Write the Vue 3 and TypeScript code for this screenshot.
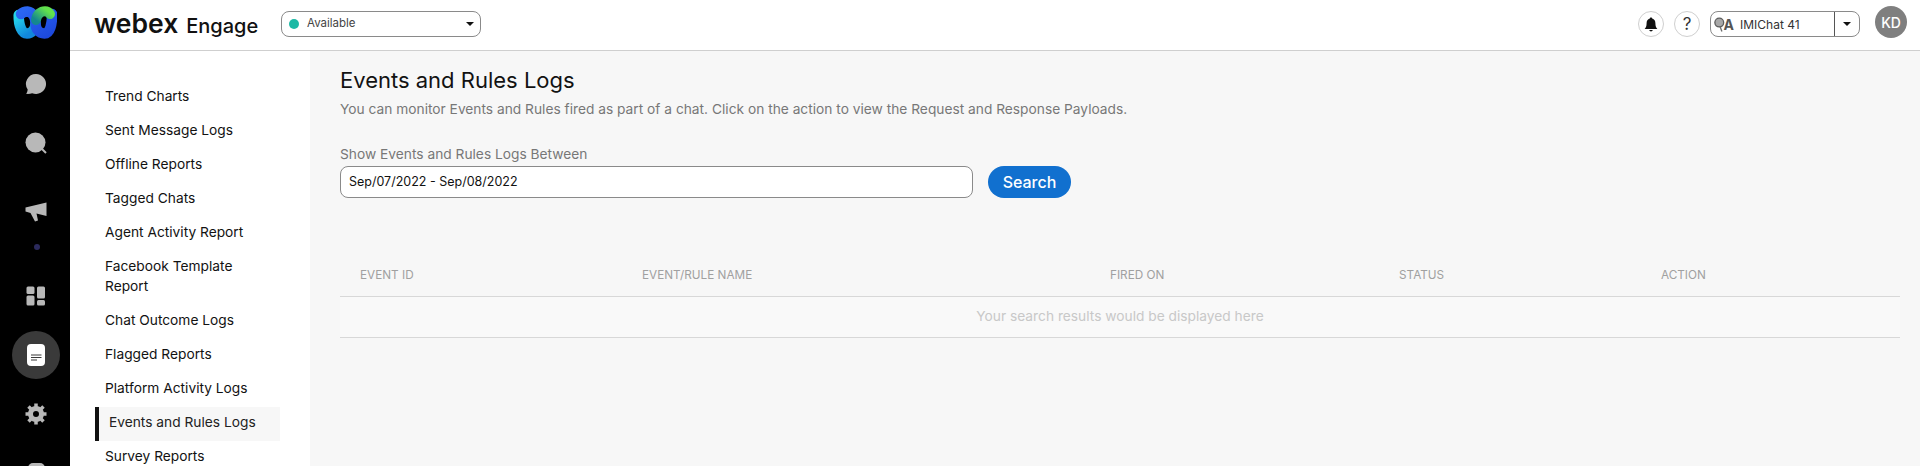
<script setup lang="ts">
const navItems = [
  'Trend Charts',
  'Sent Message Logs',
  'Offline Reports',
  'Tagged Chats',
  'Agent Activity Report',
  'Facebook Template Report',
  'Chat Outcome Logs',
  'Flagged Reports',
  'Platform Activity Logs',
  'Events and Rules Logs',
  'Survey Reports',
]
const activeItem = 'Events and Rules Logs'
const columns = ['EVENT ID', 'EVENT/RULE NAME', 'FIRED ON', 'STATUS', 'ACTION']
</script>

<template>
  <div class="app">
    <aside class="rail">
      <svg class="logo" width="44" height="34" viewBox="7 6 44 34" fill="none" stroke-linecap="round">
        <defs>
          <linearGradient id="wbxA" x1="0" y1="0" x2="0.6" y2="1">
            <stop offset="0" stop-color="#25d6ea" />
            <stop offset="1" stop-color="#1187dc" />
          </linearGradient>
          <linearGradient id="wbxB" x1="0" y1="0" x2="1" y2="1">
            <stop offset="0" stop-color="#2b66f2" />
            <stop offset="1" stop-color="#1d49dc" />
          </linearGradient>
          <linearGradient id="wbxC" x1="0" y1="1" x2="1" y2="0.2">
            <stop offset="0" stop-color="#14888f" />
            <stop offset="1" stop-color="#62e24c" />
          </linearGradient>
        </defs>
        <path d="M12.700 15C12.500 26 16 33.500 21 33.500C26 33.500 29 29 29.500 24" stroke="url(#wbxA)" stroke-width="10.500" />
        <path d="M15 14C17 12 19 11.500 21.500 11.500C27 12 29.500 18 29.500 23C29.500 29 33 33.500 38.500 33.500C44 33.500 46.300 24 46 14" stroke="url(#wbxB)" stroke-width="10.500" />
        <path d="M30 20C31 14 35 11.200 39 11.200C41.500 11.200 43 12.500 44 14" stroke="url(#wbxC)" stroke-width="10" />
      </svg>

      <div class="rail-item item-chat">
        <svg width="22" height="22" viewBox="0 0 22 22"><path fill="#b8b8b8" d="M11 1a10 10 0 1 1-3.900 19.200C5.500 20.800 3.400 21 1 20.800c1-1 1.500-2.200 1.700-4.200A10 10 0 0 1 11 1z" /></svg>
      </div>
      <div class="rail-item item-search">
        <svg width="22" height="22" viewBox="0 0 22 22"><circle cx="10.500" cy="10.500" r="10" fill="#b8b8b8" /><path d="M16 16l5 5" stroke="#b8b8b8" stroke-width="2" /></svg>
      </div>
      <div class="rail-item item-campaign">
        <svg width="22" height="20" viewBox="0 0 22 20"><path fill="#b8b8b8" d="M0.500 5.500L21.500 0.500V14L11.500 11.500 13 18.500 10 19.500 5.500 11 0.500 9.500z" /></svg>
      </div>
      <div class="rail-dot"></div>
      <div class="rail-item item-grid">
        <svg width="20" height="20" viewBox="0 0 20 20" fill="#b8b8b8">
          <rect x="0.500" y="0.500" width="8" height="7.500" rx="1.500" />
          <rect x="0.500" y="9.500" width="8" height="10" rx="1.500" />
          <rect x="11" y="0.500" width="8" height="12" rx="1.500" />
          <rect x="11" y="14" width="8" height="5.500" rx="1.500" />
        </svg>
      </div>
      <div class="rail-item item-reports">
        <svg width="18" height="22" viewBox="0 0 18 22">
          <rect width="18" height="22" rx="4" fill="#fff" />
          <path d="M4 11h10.500M4 13.500h10.500M4 16h6" stroke="#3a3a3a" stroke-width="1.200" />
        </svg>
      </div>
      <div class="rail-item item-gear">
        <svg width="22" height="22" viewBox="0 0 22 22">
          <circle cx="11" cy="11" r="5.500" fill="none" stroke="#b8b8b8" stroke-width="5" />
          <path d="M11 0.500v4M11 17.500v4M0.500 11h4M17.500 11h4M3.500 3.500l3 3M15.500 15.500l3 3M18.500 3.500l-3 3M6.500 15.500l-3 3" stroke="#b8b8b8" stroke-width="3.500" />
        </svg>
      </div>
      <div class="rail-item item-last">
        <svg width="17" height="20" viewBox="0 0 17 20"><rect width="17" height="20" rx="5" fill="#b8b8b8" /></svg>
      </div>
    </aside>

    <div class="page">
      <header class="topbar">
        <div class="brand">
          <span class="brand-webex">webex</span>
          <span class="brand-engage">Engage</span>
        </div>
        <div class="status-select">
          <span class="status-dot"></span>
          <span class="status-text">Available</span>
          <span class="caret"></span>
        </div>
        <div class="topbar-right">
          <button class="circle-btn">
            <svg width="14" height="15" viewBox="0 0 14 15"><path fill="#111" d="M7 0.500c.7 0 1.200.5 1.200 1.100C10.400 2.200 11.400 4 11.400 6.200c0 3 .7 4.300 2 5.800H.6c1.300-1.500 2-2.800 2-5.800C2.600 4 3.600 2.200 5.800 1.600 5.800 1 6.300.5 7 .5zM5.200 13h3.600A1.900 1.900 0 0 1 7 14.500 1.900 1.900 0 0 1 5.200 13z" /></svg>
          </button>
          <button class="circle-btn help">?</button>
          <div class="account-select">
            <span class="account-logo">
              <svg width="12" height="17" viewBox="0 0 12 17" fill="none">
                <circle cx="6" cy="6.300" r="5" fill="#a8a8a8" stroke="#5c5c5c" stroke-width="1.500" />
                <path d="M7 11l2 5.500" stroke="#6c6c6c" stroke-width="1.500" />
              </svg>
              <span class="account-logo-a">A</span>
            </span>
            <span class="account-name">IMIChat 41</span>
            <span class="account-toggle"><span class="caret"></span></span>
          </div>
          <div class="avatar">KD</div>
        </div>
      </header>

      <div class="body">
        <nav class="subnav">
          <a
            v-for="item in navItems"
            :key="item"
            class="subnav-item"
            :class="{ active: item === activeItem }"
          >{{ item }}</a>
        </nav>

        <main class="content">
          <h1 class="title">Events and Rules Logs</h1>
          <p class="desc">You can monitor Events and Rules fired as part of a chat. Click on the action to view the Request and Response Payloads.</p>

          <label class="field-label">Show Events and Rules Logs Between</label>
          <div class="search-row">
            <div class="date-input">Sep/07/2022 - Sep/08/2022</div>
            <button class="search-btn">Search</button>
          </div>

          <div class="table">
            <div class="table-head">
              <span v-for="col in columns" :key="col">{{ col }}</span>
            </div>
            <div class="table-empty">Your search results would be displayed here</div>
          </div>
        </main>
      </div>
    </div>
  </div>
</template>

<style scoped>
.app {
  display: flex;
  height: 100vh;
  overflow: hidden;
  font-family: Inter, "Liberation Sans", sans-serif;
  color: #121212;
}

.rail {
  flex: 0 0 70px;
  box-sizing: border-box;
  background: #000;
  display: flex;
  flex-direction: column;
  align-items: center;
  padding: 6px 0 0 2px;
}
.logo {
  flex: none;
  margin-left: -2px;
}
.rail-item {
  flex: none;
  width: 48px;
  height: 48px;
  display: flex;
  align-items: center;
  justify-content: center;
  border-radius: 50%;
}
.item-chat { margin-top: 20px; }
.item-search { margin-top: 11px; }
.item-campaign { margin-top: 21px; }
.rail-dot {
  flex: none;
  width: 6px;
  height: 6px;
  border-radius: 50%;
  background: #2b2a5c;
  margin: 8px 0 0 2px;
}
.item-grid { margin-top: 22px; }
.item-reports { margin-top: 11px; background: #3a3a3a; }
.item-gear { margin-top: 11px; }
.item-last { margin-top: 11px; }

.page {
  flex: 1;
  min-width: 0;
  display: flex;
  flex-direction: column;
}

.topbar {
  flex: 0 0 51px;
  box-sizing: border-box;
  border-bottom: 1px solid #cfcfcf;
  background: #fff;
  display: flex;
  align-items: center;
  padding: 0 13px 2px 24px;
}
.brand {
  display: flex;
  align-items: baseline;
  width: 187px;
  margin-top: -2px;
}
.brand-webex {
  font-size: 26.500px;
  font-weight: 600;
  color: #111;
}
.brand-engage {
  font-size: 20px;
  font-weight: 500;
  margin-left: 8px;
  color: #111;
}
.status-select {
  width: 200px;
  height: 26px;
  box-sizing: border-box;
  border: 1px solid #8a8a8a;
  border-radius: 8px;
  display: flex;
  align-items: center;
  padding: 0 6px 0 7px;
}
.status-dot {
  width: 10px;
  height: 10px;
  border-radius: 50%;
  background: #1db9a5;
}
.status-text {
  flex: 1;
  margin-left: 8px;
  margin-top: -2px;
  font-size: 11.500px;
  color: #444;
}
.caret {
  width: 0;
  height: 0;
  border-left: 4px solid transparent;
  border-right: 4px solid transparent;
  border-top: 4px solid #111;
}

.topbar-right {
  margin-left: auto;
  display: flex;
  align-items: center;
}
.circle-btn {
  width: 26px;
  height: 26px;
  padding: 0;
  margin-right: 10px;
  border: 1px solid #cfcfcf;
  border-radius: 50%;
  background: #fff;
  display: flex;
  align-items: center;
  justify-content: center;
  font-family: inherit;
  font-size: 17px;
  color: #333;
}
.account-select {
  width: 150px;
  height: 26px;
  box-sizing: border-box;
  border: 1px solid #8a8a8a;
  border-radius: 8px;
  display: flex;
  align-items: center;
  padding-left: 3px;
}
.account-logo {
  width: 20px;
  display: flex;
  align-items: center;
}
.account-logo-a {
  margin-left: -1px;
  font-size: 14px;
  font-weight: 700;
  color: #555;
}
.account-name {
  flex: 1;
  margin-left: 6px;
  font-size: 12px;
  color: #333;
}
.account-toggle {
  width: 25px;
  height: 100%;
  box-sizing: border-box;
  border-left: 1px solid #555;
  display: flex;
  align-items: center;
  justify-content: center;
}
.avatar {
  width: 32px;
  height: 32px;
  margin-left: 15px;
  margin-top: -4px;
  border-radius: 50%;
  background: #7f7f7f;
  color: #fff;
  font-size: 14px;
  font-weight: 500;
  display: flex;
  align-items: center;
  justify-content: center;
}

.body {
  flex: 1;
  min-height: 0;
  display: flex;
}
.subnav {
  flex: 0 0 240px;
  box-sizing: border-box;
  background: #fff;
  padding: 28px 30px 0 25px;
}
.subnav-item {
  display: block;
  padding: 7px 10px;
  font-size: 13.750px;
  line-height: 20px;
  color: #121212;
}
.subnav-item.active {
  margin: 2px 0 -2px;
  padding: 5px 10px 9px;
  border-left: 4px solid #121212;
  background: #f7f7f7;
  color: #222;
}

.content {
  flex: 1;
  min-width: 0;
  background: #f7f7f7;
  padding: 15px 20px 0 30px;
}
.title {
  margin: 0;
  font-size: 22px;
  font-weight: 400;
  line-height: 28px;
  color: #121212;
}
.desc {
  margin: 5px 0 0;
  font-size: 13.750px;
  line-height: 20px;
  color: #777;
}
.field-label {
  display: block;
  margin-top: 25px;
  font-size: 13.750px;
  line-height: 20px;
  color: #777;
}
.search-row {
  display: flex;
  gap: 15px;
  margin-top: 2px;
}
.date-input {
  width: 633px;
  height: 32px;
  box-sizing: border-box;
  border: 1px solid #8a8a8a;
  border-radius: 8px;
  background: #fff;
  padding: 0 8px;
  font-size: 12.500px;
  line-height: 30px;
  color: #121212;
}
.search-btn {
  width: 83px;
  height: 32px;
  border: 0;
  border-radius: 16px;
  background: #1170cf;
  color: #fff;
  font-family: inherit;
  font-size: 16px;
  font-weight: 500;
}

.table {
  margin-top: 61px;
}
.table-head {
  display: grid;
  grid-template-columns: 282px 468px 289px 262px 1fr;
  height: 38px;
  box-sizing: border-box;
  padding: 0 0 6px 20px;
  align-items: center;
  border-bottom: 1px solid #d8d8d8;
  font-size: 11.750px;
  color: #a0a0a0;
}
.table-empty {
  height: 41px;
  box-sizing: border-box;
  padding-bottom: 3px;
  border-bottom: 1px solid #d8d8d8;
  background: #f9f9f9;
  display: flex;
  align-items: center;
  justify-content: center;
  font-size: 13.750px;
  color: #c8c8c8;
}
</style>
